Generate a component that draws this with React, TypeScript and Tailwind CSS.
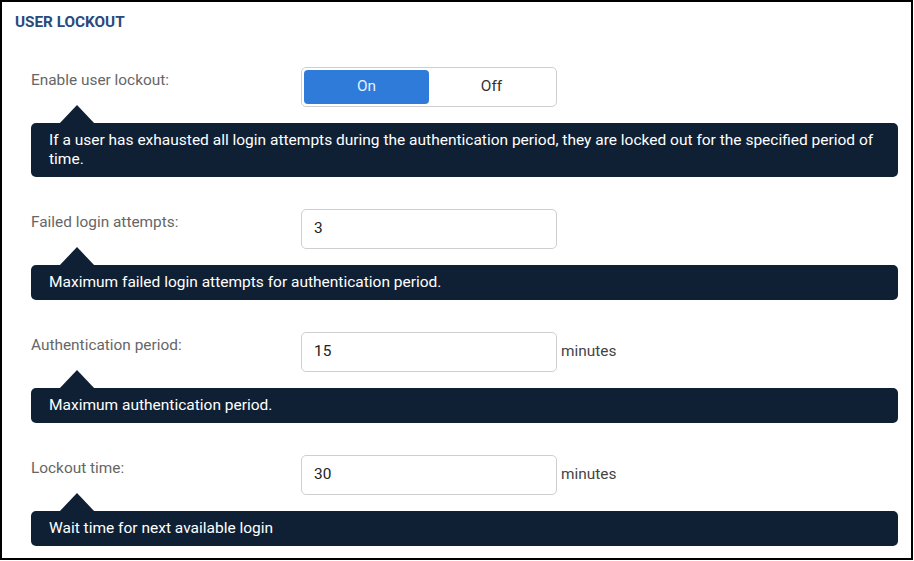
import type { ReactNode } from "react";

type FieldProps = {
  label: string;
  hint: string;
  children: ReactNode;
};

const Field = ({ label, hint, children }: FieldProps) => (
  <div className="mb-8">
    <div className="flex">
      <div className="w-[270px] pt-[3px] text-[15.4px] leading-5 text-[#666]">{label}</div>
      <div className="flex items-center">{children}</div>
    </div>
    <div className="relative mt-4 w-[867px] rounded-[5px] bg-[#0f2034] px-[18px] py-2 text-[15.5px] leading-[19px] text-white">
      <svg
        className="absolute -top-[18px] left-[28px]"
        width="36"
        height="19"
        viewBox="0 0 36 19"
      >
        <polygon points="0,19 18,0 36,19" fill="#0f2034" />
      </svg>
      {hint}
    </div>
  </div>
);

const TextInput = ({ value }: { value: string }) => (
  <div className="flex h-10 w-[256px] items-center rounded-[5px] border border-[#cfcfcf] bg-white px-3 text-[15.4px] text-[#222]">
    {value}
  </div>
);

const Unit = () => <span className="ml-1 text-[15.4px] text-[#444]">minutes</span>;

const App = () => {
  return (
    <div
      className="h-[561px] w-[914px] bg-white"
      style={{ fontFamily: "Roboto, 'Liberation Sans', sans-serif" }}
    >
      <div className="h-[560px] w-[913px] border-2 border-black pt-[10px] pl-[13px]">
        <h2 className="text-[15.3px] font-bold leading-5 text-[#2b4a7a]">USER LOCKOUT</h2>
        <div className="mt-[35px] pl-4">
          <Field
            label="Enable user lockout:"
            hint="If a user has exhausted all login attempts during the authentication period, they are locked out for the specified period of time."
          >
            <div className="flex h-10 w-[256px] rounded-[5px] border border-[#cfcfcf] p-[2px]">
              <button className="flex-1 rounded-[4px] bg-[#2f7bd9] text-[15.4px] text-[#e6f0ff]">On</button>
              <button className="flex-1 text-[15.4px] text-[#333]">Off</button>
            </div>
          </Field>
          <Field label="Failed login attempts:" hint="Maximum failed login attempts for authentication period.">
            <TextInput value="3" />
          </Field>
          <Field label="Authentication period:" hint="Maximum authentication period.">
            <TextInput value="15" />
            <Unit />
          </Field>
          <Field label="Lockout time:" hint="Wait time for next available login">
            <TextInput value="30" />
            <Unit />
          </Field>
        </div>
      </div>
    </div>
  );
};

export default App;
